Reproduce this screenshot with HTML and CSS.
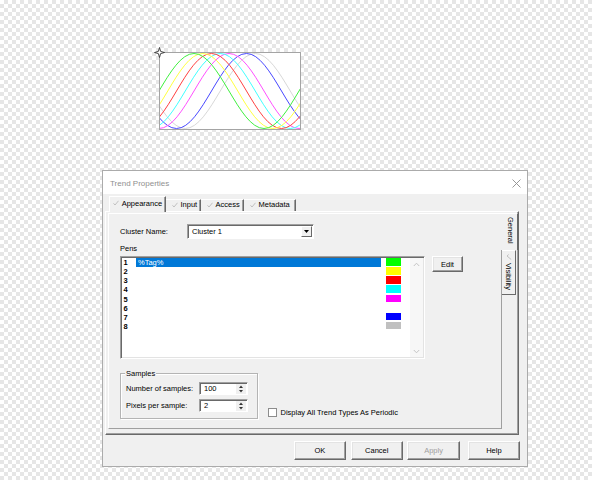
FILE: index.html
```html
<!DOCTYPE html>
<html>
<head>
<meta charset="utf-8">
<link rel="stylesheet" href="styles.css">
</head>
<body>
<div class="trend">
  <svg class="waves" width="140" height="76" viewBox="0 0 140 76">
    <defs>
      <path id="w" fill="none" stroke-width="1" d="M-246 0.5 c25.4 0 44.6 75 70 75 c25.4 0 44.6 -75 70 -75 c25.4 0 44.6 75 70 75 c25.4 0 44.6 -75 70 -75 c25.4 0 44.6 75 70 75 c25.4 0 44.6 -75 70 -75 c25.4 0 44.6 75 70 75 c25.4 0 44.6 -75 70 -75"/>
    </defs>
    <use href="#w" stroke="#d8d8d8" transform="translate(61.25 0)"/>
    <use href="#w" stroke="#4848ff" transform="translate(52.5 0)"/>
    <use href="#w" stroke="#ff50ff" transform="translate(35 0)"/>
    <use href="#w" stroke="#40ffff" transform="translate(26.25 0)"/>
    <use href="#w" stroke="#ff4040" transform="translate(17.5 0)"/>
    <use href="#w" stroke="#ffff40" transform="translate(8.75 0)"/>
    <use href="#w" stroke="#40f040"/>
  </svg>
  <svg class="anchor" width="11" height="11" viewBox="0 0 11 11">
    <path d="M5.5 0.5 L6.6 4.4 L10.5 5.5 L6.6 6.6 L5.5 10.5 L4.4 6.6 L0.5 5.5 L4.4 4.4 Z" fill="#fff" stroke="#333" stroke-width="0.9"/>
  </svg>
</div>

<div class="dialog">
  <div class="titlebar">
    <span class="title">Trend Properties</span>
    <svg class="close" width="9" height="9" viewBox="0 0 9 9"><path d="M0.5 0.5 L8.5 8.5 M8.5 0.5 L0.5 8.5" stroke="#8c8c8c" stroke-width="0.9"/></svg>
  </div>

  <div class="tabs">
    <div class="tab sel"><svg class="chk" width="6" height="6" viewBox="0 0 6 6"><path d="M0.5 3.3 L2 5 L5.5 0.8" fill="none" stroke="#b4b4b4" stroke-width="0.8"/></svg>Appearance</div>
    <div class="tab t-input"><svg class="chk" width="6" height="6" viewBox="0 0 6 6"><path d="M0.5 3.3 L2 5 L5.5 0.8" fill="none" stroke="#b4b4b4" stroke-width="0.8"/></svg>Input</div>
    <div class="tab t-access"><svg class="chk" width="6" height="6" viewBox="0 0 6 6"><path d="M0.5 3.3 L2 5 L5.5 0.8" fill="none" stroke="#b4b4b4" stroke-width="0.8"/></svg>Access</div>
    <div class="tab t-meta"><svg class="chk" width="6" height="6" viewBox="0 0 6 6"><path d="M0.5 3.3 L2 5 L5.5 0.8" fill="none" stroke="#b4b4b4" stroke-width="0.8"/></svg>Metadata</div>
  </div>

  <div class="panel">
    <div class="page">
      <div class="row-cluster">
        <span class="lbl-cluster">Cluster Name:</span>
        <div class="combo">
          <span class="combo-text">Cluster 1</span>
          <span class="combo-btn"><svg width="5" height="3" viewBox="0 0 5 3"><path d="M0 0 H5 L2.5 3 Z" fill="#000"/></svg></span>
        </div>
      </div>
      <div class="lbl-pens">Pens</div>
      <div class="row-list">
        <div class="list">
          <div class="rows">
            <div class="prow"><span class="num">1</span><span class="name selected">%Tag%</span><span class="sw" style="background:#00ff00"></span></div>
            <div class="prow"><span class="num">2</span><span class="name"></span><span class="sw" style="background:#ffff00"></span></div>
            <div class="prow"><span class="num">3</span><span class="name"></span><span class="sw" style="background:#ff0000"></span></div>
            <div class="prow"><span class="num">4</span><span class="name"></span><span class="sw" style="background:#00ffff"></span></div>
            <div class="prow"><span class="num">5</span><span class="name"></span><span class="sw" style="background:#ff00ff"></span></div>
            <div class="prow"><span class="num">6</span><span class="name"></span></div>
            <div class="prow"><span class="num">7</span><span class="name"></span><span class="sw" style="background:#0000ff"></span></div>
            <div class="prow"><span class="num">8</span><span class="name"></span><span class="sw" style="background:#c0c0c0"></span></div>
          </div>
          <div class="scroll">
            <svg width="7" height="5" viewBox="0 0 7 5"><path d="M0.8 4 L3.5 1.2 L6.2 4" fill="none" stroke="#c4c4c4" stroke-width="1"/></svg>
            <svg width="7" height="5" viewBox="0 0 7 5"><path d="M0.8 1 L3.5 3.8 L6.2 1" fill="none" stroke="#c4c4c4" stroke-width="1"/></svg>
          </div>
        </div>
        <div class="btn btn-edit">Edit</div>
      </div>
      <div class="row-bottom">
        <div class="group">
          <div class="group-title">Samples</div>
          <div class="grow">
            <span class="glbl">Number of samples:</span>
            <div class="spin"><span class="spin-text">100</span><span class="spin-btns"><svg width="4" height="3" viewBox="0 0 4 3"><path d="M0 3 H4 L2 0.5 Z" fill="#333"/></svg><svg width="4" height="3" viewBox="0 0 4 3"><path d="M0 0 H4 L2 2.5 Z" fill="#333"/></svg></span></div>
          </div>
          <div class="grow grow2">
            <span class="glbl">Pixels per sample:</span>
            <div class="spin"><span class="spin-text">2</span><span class="spin-btns"><svg width="4" height="3" viewBox="0 0 4 3"><path d="M0 3 H4 L2 0.5 Z" fill="#333"/></svg><svg width="4" height="3" viewBox="0 0 4 3"><path d="M0 0 H4 L2 2.5 Z" fill="#333"/></svg></span></div>
          </div>
        </div>
        <div class="check-row">
          <span class="checkbox"></span>
          <span>Display All Trend Types As Periodic</span>
        </div>
      </div>
    </div>
    <div class="vtabs">
      <div class="vtab vsel"><span class="vtext">General</span></div>
      <div class="vtab"><svg class="vchk" width="6" height="6" viewBox="0 0 6 6"><path d="M2.7 0.5 L1 2 L5.2 5.5" fill="none" stroke="#b4b4b4" stroke-width="0.8"/></svg><span class="vtext">Visibility</span></div>
    </div>
  </div>

  <div class="btns">
    <div class="btn">OK</div>
    <div class="btn">Cancel</div>
    <div class="btn disabled">Apply</div>
    <div class="btn help">Help</div>
  </div>
</div>
</body>
</html>
```

FILE: styles.css
```css
* { box-sizing: border-box; }
html, body { margin: 0; padding: 0; }
body {
  width: 592px;
  height: 480px;
  overflow: hidden;
  position: relative;
  background-color: #fff;
  background-image: conic-gradient(#e6e6e6 25%, #fff 0 50%, #e6e6e6 0 75%, #fff 0);
  background-size: 8px 8px;
  font-family: "Liberation Sans", Arial, sans-serif;
  font-size: 7.5px;
  color: #000;
}

/* trend object on the design canvas */
.trend {
  position: absolute;
  left: 159px;
  top: 52px;
  width: 142px;
  height: 78px;
  border: 1px solid #a4a4a4;
  background: #fff;
}
.waves { display: block; }
.anchor { position: absolute; left: -6px; top: -6px; }

/* dialog window on the canvas */
.dialog {
  position: absolute;
  left: 102px;
  top: 170px;
  width: 426px;
  height: 297px;
  border: 1px solid #ababab;
  background: #f0f0f0;
  display: flex;
  flex-direction: column;
}
.titlebar {
  height: 23px;
  flex: none;
  background: #fff;
  display: flex;
  align-items: center;
  justify-content: space-between;
  padding: 1px 6px 0 7px;
}
.title { font-size: 8px; color: #8f8f8f; }
.close { display: block; }

/* top tabs */
.tabs {
  height: 17px;
  flex: none;
  display: flex;
  align-items: flex-end;
  padding-left: 6px;
}
.tab {
  height: 12px;
  display: flex;
  align-items: center;
  padding-left: 5.5px;
  padding-bottom: 1.5px;
  border-right: 1px solid #696969;
  box-shadow: inset -1px 0 0 #a0a0a0;
  border-top: 1px solid #fff;
  border-left: 1px solid #fff;
}
.tab .chk { margin-right: 3px; flex: none; }
.tab.sel { height: 16px; width: 57px; padding-left: 2.5px; padding-bottom: 2.5px; margin-bottom: -1px; position: relative; z-index: 1; background: #f0f0f0; }
.tab.sel .chk { margin-right: 3.2px; }
.t-input { width: 35px; border-left: none; }
.t-access { width: 43px; border-left: none; }
.t-meta { width: 52px; border-left: none; }

/* tab panel */
.panel {
  flex: none;
  margin-left: 2px;
  width: 414px;
  height: 224px;
  border: 1px solid;
  border-color: #fff #696969 #696969 #fff;
  box-shadow: inset -1px -1px 0 #a0a0a0;
  display: flex;
  padding: 1px 0 5px 2px;
}
.page {
  width: 394px;
  border: 1px solid;
  border-color: #fff #a0a0a0 #a0a0a0 #fff;
  padding: 10px 0 0 11px;
}
.row-cluster { display: flex; align-items: center; height: 15px; }
.lbl-cluster { width: 67px; }
.combo {
  width: 127px;
  height: 15px;
  background: #fff;
  border: 1px solid;
  border-color: #a0a0a0 #fff #fff #a0a0a0;
  box-shadow: inset 1px 1px 0 #696969;
  display: flex;
  align-items: center;
  padding: 1px 1px 1px 4px;
}
.combo-text { flex: 1; }
.combo-btn {
  width: 11px;
  height: 11px;
  background: #f0f0f0;
  border: 1px solid;
  border-color: #fff #696969 #696969 #fff;
  display: flex;
  align-items: center;
  justify-content: center;
}
.combo-btn svg { display: block; }
.lbl-pens { margin-top: 5px; height: 9px; line-height: 9px; }

.row-list { display: flex; align-items: flex-start; margin-top: 3px; }
.list {
  width: 305px;
  height: 103px;
  background: #fff;
  border: 1px solid;
  border-color: #a0a0a0 #fff #fff #a0a0a0;
  box-shadow: inset 1px 1px 0 #696969, inset -1px -1px 0 #e3e3e3;
  padding: 1px;
  display: flex;
}
.rows { flex: 1; }
.prow { display: flex; height: 9.15px; line-height: 9px; align-items: flex-start; }
.num { width: 14px; padding-left: 1.5px; font-weight: bold; }
.name { width: 245px; height: 8.5px; padding-left: 2px; }
.name.selected { background: #0078d7; color: #fff; }
.sw { width: 15px; height: 7.5px; margin-left: 5px; }
.scroll {
  width: 13px;
  background: #f7f7f7;
  display: flex;
  flex-direction: column;
  justify-content: space-between;
  align-items: center;
  padding: 4px 0 3px;
}
.scroll svg { display: block; }

.btn {
  background: #f0f0f0;
  border: 1px solid;
  border-color: #fff #696969 #696969 #fff;
  box-shadow: inset -1px -1px 0 #a0a0a0, inset 1px 1px 0 #e3e3e3;
  display: flex;
  align-items: center;
  justify-content: center;
}
.btn-edit { width: 31px; height: 16px; margin-left: 7px; }

.row-bottom { display: flex; align-items: flex-end; margin-top: 14px; }
.group {
  width: 138px;
  border: 1px solid #b4b4b4;
  box-shadow: inset 1px 1px 0 #fff, 1px 1px 0 #fff;
  padding: 0 0 6px 5px;
}
.group-title {
  width: fit-content;
  margin: -5px 0 0 -1px;
  padding: 0 1px;
  height: 9px;
  line-height: 9px;
  background: #f0f0f0;
}
.grow { display: flex; align-items: center; height: 13px; margin-top: 4px; }
.grow2 { margin-top: 4px; }
.glbl { width: 73px; }
.spin {
  width: 49px;
  height: 13px;
  background: #fff;
  border: 1px solid;
  border-color: #a0a0a0 #fff #fff #a0a0a0;
  box-shadow: inset 1px 1px 0 #696969;
  display: flex;
  align-items: center;
  padding: 1px 1px 1px 4px;
}
.spin-text { flex: 1; }
.spin-btns {
  width: 10px;
  height: 10px;
  display: flex;
  flex-direction: column;
  justify-content: space-around;
  align-items: center;
  background: #f0f0f0;
}
.spin-btns svg { display: block; }

.check-row { display: flex; align-items: center; gap: 4px; margin-left: 10px; margin-bottom: 2px; }
.checkbox {
  width: 8.5px;
  height: 8.5px;
  background: #fff;
  border: 1px solid #8c8c8c;
}

/* right-side tabs */
.vtabs { width: 16px; display: flex; flex-direction: column; }
.vtab {
  width: 14px;
  height: 45px;
  border-top: 1px solid #fff;
  border-right: 1px solid #696969;
  border-bottom: 1px solid #696969;
  display: flex;
  flex-direction: column;
  align-items: center;
  padding-top: 3px;
}
.vtab.vsel {
  width: 17px;
  height: 37px;
  margin-left: -1px;
  border-bottom: none;
  background: #f0f0f0;
  padding-top: 3px;
  padding-left: 2px;
}
.vtext { writing-mode: vertical-rl; line-height: 9px; }
.vchk { display: block; margin-bottom: 3px; }

/* dialog buttons */
.btns {
  flex: none;
  display: flex;
  justify-content: flex-end;
  gap: 4.5px;
  margin-top: 6px;
  padding-right: 7px;
}
.btns .btn { width: 52.3px; height: 19px; }
.btns .btn.disabled { color: #a0a0a0; }
.btns .btn.help { margin-left: 3.5px; }
```
